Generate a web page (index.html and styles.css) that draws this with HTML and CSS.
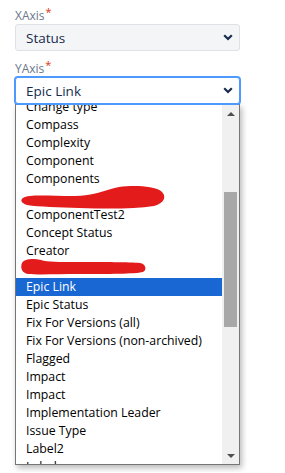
FILE: index.html
```html
<!DOCTYPE html>
<html lang="en">
<head>
  <meta charset="utf-8">
  <title>Chart axes</title>
  <link rel="stylesheet" href="styles.css">
</head>
<body>
  <main class=form>
    <div class=field>
      <label class=label>XAxis<span class=req>*</span></label>
      <div class=select>
        <span>Status</span>
        <svg class=chev width="10" height="7" viewBox="0 0 10 7"><path d="M1.2 1.2l3.8 3.8 3.8-3.8" fill="none" stroke="#172b4d" stroke-width="2.2"/></svg>
      </div>
    </div>
    <div class="field field-open">
      <label class=label>YAxis<span class=req>*</span></label>
      <div class="select focused">
        <span>Epic Link</span>
        <svg class=chev width="10" height="7" viewBox="0 0 10 7"><path d="M1.2 1.2l3.8 3.8 3.8-3.8" fill="none" stroke="#172b4d" stroke-width="2.2"/></svg>
      </div>

      <div class=dropdown>
        <div class=options>
          <ul class=list>
            <li>Change type</li>
            <li>Compass</li>
            <li>Complexity</li>
            <li>Component</li>
            <li>Components</li>
            <li>&nbsp;</li>
            <li>ComponentTest2</li>
            <li>Concept Status</li>
            <li>Creator</li>
            <li>&nbsp;</li>
            <li class=selected>Epic Link</li>
            <li>Epic Status</li>
            <li>Fix For Versions (all)</li>
            <li>Fix For Versions (non-archived)</li>
            <li>Flagged</li>
            <li>Impact</li>
            <li>Impact</li>
            <li>Implementation Leader</li>
            <li>Issue Type</li>
            <li>Label2</li>
            <li>Labels</li>
          </ul>
          <svg class="scribble scribble-1" width="150" height="26" viewBox="0 0 150 26">
            <path d="M4 13 C10 9 30 11 55 11 C75 11 85 5 100 2 C115 0 135 1 142 6 C148 11 146 18 135 21 C115 24 90 24 60 23 C40 22 20 22 8 20 C2 18 1 15 4 13 Z" fill="#e31b1b"/>
          </svg>
          <svg class="scribble scribble-2" width="130" height="20" viewBox="0 0 130 20">
            <path d="M3 6 C5 2 14 1 22 3 C28 5 40 5 60 5 C85 5 110 5 121 6 C127 7 128 13 124 15 C115 17 90 17 60 17 C40 17 20 18 9 17 C3 16 1 11 3 6 Z" fill="#e31b1b"/>
          </svg>
        </div>
        <div class=scrollbar>
          <div class="arrow up"></div>
          <div class=track><div class=thumb></div></div>
          <div class="arrow down"></div>
        </div>
      </div>
    </div>
  </main>
</body>
</html>
```

FILE: styles.css
```css
html, body {
  margin: 0;
  background: #fff;
  font: 12px 'Open Sans', sans-serif;
}
.form {
  padding: 8px 45px 7px 15px;
}
.field {
  display: flex;
  flex-direction: column;
}
.field-open {
  margin-top: 10px;
}
.label {
  height: 16px;
  line-height: 16px;
  color: #6b778c;
  font-size: 12px;
}
.req {
  color: #de350b;
  font-size: 11px;
  position: relative;
  top: -4px;
  margin-left: 1px;
}
.select {
  height: 25px;
  border: 1px solid #dfe1e6;
  border-radius: 3px;
  background: #f4f5f7;
  display: flex;
  align-items: center;
  justify-content: space-between;
  padding: 0 6px 0 10px;
  color: #172b4d;
  font-size: 13.5px;
}
.select.focused {
  background: #fff;
  border-color: #4c9aff;
  box-shadow: 0 0 0 1px #4c9aff;
  position: relative;
  z-index: 1;
}
.chev {
  display: block;
}

.dropdown {
  height: 359px;
  border: 1px solid #767676;
  background: #fff;
  box-shadow: 2px 3px 6px rgba(0, 0, 0, .28);
  display: flex;
}
.options {
  position: relative;
  flex: 1;
  overflow: hidden;
}
.list {
  list-style: none;
  margin: -7px 0 0;
  padding: 0;
}
.list li {
  height: 18px;
  line-height: 18px;
  padding-left: 10px;
  color: #000;
  font-size: 12.3px;
  white-space: nowrap;
}
.list li.selected {
  background: #1967d2;
  color: #fff;
}
.scribble {
  position: absolute;
  left: 3px;
}
.scribble-1 { top: 80px; }
.scribble-2 { top: 152px; }

.scrollbar {
  width: 17px;
  background: #f0f0f0;
  display: flex;
  flex-direction: column;
}
.arrow {
  height: 17px;
  display: flex;
  align-items: center;
  justify-content: center;
}
.arrow::before {
  content: '';
  border-left: 4px solid transparent;
  border-right: 4px solid transparent;
}
.arrow.up::before {
  border-bottom: 4px solid #505050;
}
.arrow.down::before {
  border-top: 4px solid #505050;
}
.track {
  flex: 1;
  padding: 70px 2px 0;
}
.thumb {
  height: 135px;
  background: #a8a8a8;
}
```
